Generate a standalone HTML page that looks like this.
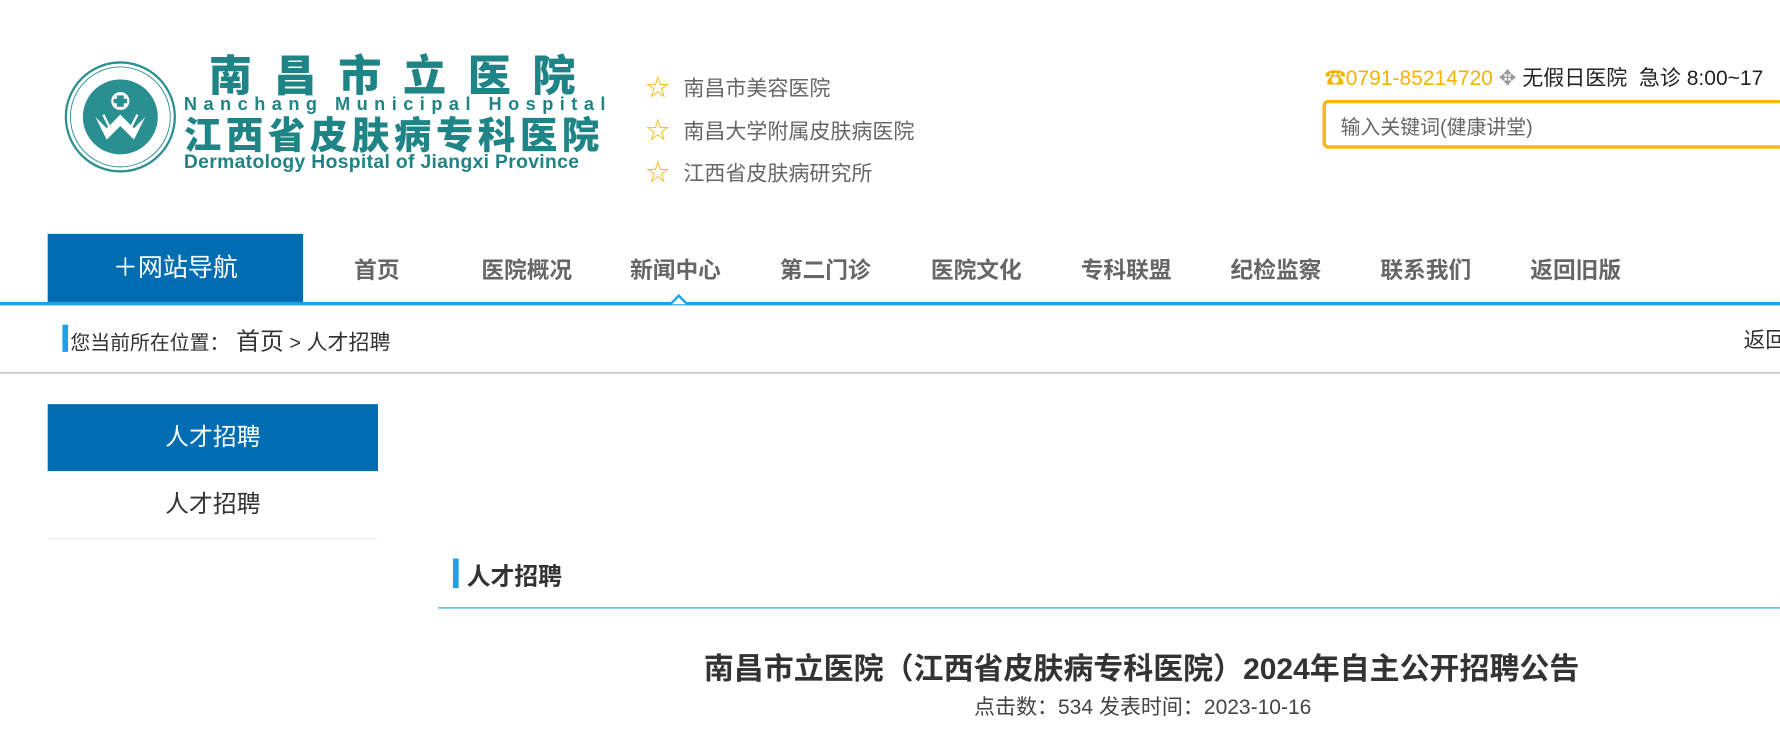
<!DOCTYPE html>
<html><head><meta charset="utf-8"><style>
*{margin:0;padding:0;box-sizing:border-box}
html,body{width:1780px;height:732px;overflow:hidden;background:#fff}
body{font-family:"Liberation Sans","Noto Sans CJK SC",sans-serif;position:relative}
#w{position:absolute;left:0;top:0;width:1568px;height:645px;transform:scale(1.13520);transform-origin:0 0;overflow:hidden}
.abs{position:absolute;white-space:nowrap}
.teal{color:#1e8486;font-weight:900}
.nav a{position:absolute;top:222px;font-size:20px;font-weight:bold;color:#666;}
</style></head><body><div id="w">
<!-- logo -->
<svg class="abs" style="left:56px;top:53px" width="100" height="100" viewBox="0 0 100 100">
<circle cx="50" cy="50" r="48" fill="#fff" stroke="#2a8f90" stroke-width="2"/>
<circle cx="50" cy="50" r="44" fill="none" stroke="#2a8f90" stroke-width="0.8"/>
<circle cx="50" cy="50" r="33" fill="#2a8f90"/>
<circle cx="50" cy="36" r="8" fill="#fff"/>
<path d="M47 31h6v3h3v4h-3v3h-6v-3h-3v-4h3z" fill="#2a8f90"/>
<path d="M28 50l10 20 12-12 12 12 10-20-10 10-12-12-12 12z" fill="#fff"/>
<path d="M35 48l8 16M57 64l8-16" stroke="#fff" stroke-width="2"/>
</svg>
<div class="abs teal" style="left:184px;top:46px;font-size:38px;letter-spacing:19px;line-height:44px">南昌市立医院</div>
<div class="abs teal" style="left:162px;top:84px;font-size:16px;letter-spacing:5.7px;font-weight:bold">Nanchang Municipal Hospital</div>
<div class="abs teal" style="left:162px;top:101px;font-size:33px;letter-spacing:4px;line-height:38px">江西省皮肤病专科医院</div>
<div class="abs teal" style="left:162px;top:133px;font-size:17px;font-weight:bold;letter-spacing:0.3px">Dermatology Hospital of Jiangxi Province</div>
<!-- links -->
<div class="abs" style="left:569px;top:59px;font-size:18.5px;color:#666;line-height:37.5px">
<div><span style="color:#f5b90f;font-size:21px;margin-right:12px">☆</span>南昌市美容医院</div>
<div><span style="color:#f5b90f;font-size:21px;margin-right:12px">☆</span>南昌大学附属皮肤病医院</div>
<div><span style="color:#f5b90f;font-size:21px;margin-right:12px">☆</span>江西省皮肤病研究所</div>
</div>
<div class="abs" style="left:1167px;top:55px;font-size:18.5px;color:#222"><span style="color:#f5b300">☎0791-85214720</span> <span style="color:#999">✥</span> 无假日医院&nbsp; 急诊 8:00~17</div>
<div class="abs" style="left:1165px;top:88px;width:640px;height:43px;border:3px solid #f5b90f;border-radius:5px;font-size:17.5px;color:#666;padding:8px 13px">输入关键词(健康讲堂)</div>
<!-- nav -->
<div class="abs" style="left:42px;top:206px;width:225px;height:60px;background:#006db3;color:#fff;font-size:22px;text-align:center;line-height:60px">＋网站导航</div>
<div class="abs" style="left:0;top:266px;width:1780px;height:3px;background:#1ea1e6"></div>
<div class="abs" style="left:590px;top:259px;width:0;height:0;border-left:8px solid transparent;border-right:8px solid transparent;border-bottom:8px solid #1ea1e6"></div>
<div class="abs" style="left:592px;top:262px;width:0;height:0;border-left:6px solid transparent;border-right:6px solid transparent;border-bottom:6px solid #fff"></div>
<div class="nav">
<a style="left:312px">首页</a><a style="left:424px">医院概况</a><a style="left:555px">新闻中心</a><a style="left:687px">第二门诊</a><a style="left:820px">医院文化</a><a style="left:952px">专科联盟</a><a style="left:1084px">纪检监察</a><a style="left:1216px">联系我们</a><a style="left:1348px">返回旧版</a>
</div>
<!-- breadcrumb -->
<div class="abs" style="left:55px;top:286px;width:5px;height:24px;background:#1ea1e6"></div>
<div class="abs" style="left:62px;top:285px;font-size:17.5px;color:#333">您当前所在位置：<span style="font-size:21px;margin-left:6px">首页</span> &gt; <span style="font-size:18.5px">人才招聘</span></div>
<div class="abs" style="left:1536px;top:285px;font-size:19px;color:#333">返回</div>
<div class="abs" style="left:0;top:328px;width:1780px;height:1px;background:#aaa"></div>
<!-- sidebar -->
<div class="abs" style="left:42px;top:356px;width:291px;height:59px;background:#006db3;color:#fff;font-size:21px;text-align:center;line-height:59px">人才招聘</div>
<div class="abs" style="left:42px;top:415px;width:291px;height:60px;border-bottom:1px solid #eee;color:#333;font-size:21px;text-align:center;line-height:60px">人才招聘</div>
<!-- content -->
<div class="abs" style="left:399px;top:492px;width:5px;height:26px;background:#1ea1e6"></div>
<div class="abs" style="left:411px;top:492px;font-size:21px;font-weight:bold;color:#333">人才招聘</div>
<div class="abs" style="left:386px;top:535px;width:1400px;height:1px;background:#1ea1e6"></div>
<div class="abs" style="left:620px;top:567px;font-size:26.4px;font-weight:bold;color:#333">南昌市立医院（江西省皮肤病专科医院）2024年自主公开招聘公告</div>
<div class="abs" style="left:858px;top:609px;font-size:18.5px;color:#444">点击数：534 发表时间：2023-10-16</div>
</div></body></html>
